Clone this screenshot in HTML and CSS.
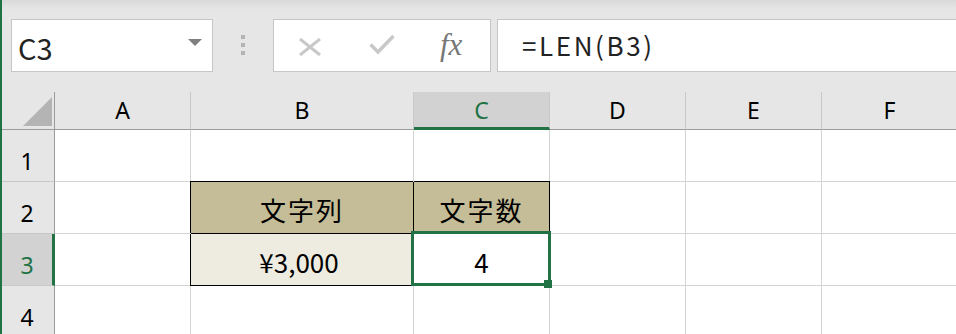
FILE: index.html
```html
<!DOCTYPE html>
<html lang="ja">
<head>
  <meta charset="UTF-8" />
  <meta name="viewport" content="width=device-width, initial-scale=1.0">
  <title>LEN</title>
  <link rel="stylesheet" href="styles.css">
</head>
<body>
  <div class="app">
    <div class="toolbar">
      <div class="namebox">
        <span class="ref">C3</span>
        <span class="caret"></span>
      </div>
      <div class="grip"><i></i><i></i><i></i></div>
      <div class="fbtns">
        <svg class="icon-x" width="24" height="18" viewBox="0 0 24 18">
          <path d="M2 1 L22 17 M22 1 L2 17" stroke="#c8c8c8" stroke-width="3" fill="none" />
        </svg>
        <svg class="icon-ok" width="26" height="21" viewBox="0 0 26 21">
          <path d="M1.5 10.5 L9 18 L24.5 2" stroke="#c8c8c8" stroke-width="3.5" fill="none" />
        </svg>
        <span class="fx">fx</span>
      </div>
      <div class="formula">=LEN(B3)</div>
    </div>

    <div class="sheet">
      <div class="corner"><span class="tri"></span></div>
      <div class="ch">A</div>
      <div class="ch">B</div>
      <div class="ch on">C</div>
      <div class="ch">D</div>
      <div class="ch">E</div>
      <div class="ch">F</div>

      <div class="rh">1</div>
      <div class="c"></div>
      <div class="c"></div>
      <div class="c"></div>
      <div class="c"></div>
      <div class="c"></div>
      <div class="c"></div>

      <div class="rh">2</div>
      <div class="c"></div>
      <div class="c head tl">文字列</div>
      <div class="c head t">文字数</div>
      <div class="c"></div>
      <div class="c"></div>
      <div class="c"></div>

      <div class="rh on">3</div>
      <div class="c"></div>
      <div class="c val l">¥3,000</div>
      <div class="c val2 active">4<span class="sel"><span class="handle"></span></span></div>
      <div class="c"></div>
      <div class="c"></div>
      <div class="c"></div>

      <div class="rh">4</div>
      <div class="c"></div>
      <div class="c"></div>
      <div class="c"></div>
      <div class="c"></div>
      <div class="c"></div>
      <div class="c"></div>
    </div>
  </div>
</body>
</html>
```

FILE: styles.css
```css
html, body {
  margin: 0;
  padding: 0;
  background: #e6e6e6;
  overflow: hidden;
}

.app {
  border-left: 2px solid #217346;
  height: 334px;
  overflow: hidden;
  font-family: "Noto Sans CJK JP", "Noto Sans", sans-serif;
  color: #000;
}

/* formula bar */
.toolbar {
  height: 92px;
  box-sizing: border-box;
  padding: 19px 0 0 9px;
  display: flex;
  align-items: flex-start;
  background: linear-gradient(#d9d9d9 0, #e4e4e4 8px, #e6e6e6 12px);
}

.namebox {
  width: 202px;
  height: 53px;
  box-sizing: border-box;
  background: #fff;
  border: 1px solid #c6c6c6;
  display: flex;
  align-items: center;
  padding: 0 10px 0 6px;
}

.ref {
  flex: 1;
  font-size: 29px;
  color: #222;
  line-height: 1;
  margin-top: 3px;
}

.caret {
  width: 0;
  height: 0;
  border-left: 7px solid transparent;
  border-right: 7px solid transparent;
  border-top: 7px solid #7f7f7f;
  margin-top: -6px;
}

.grip {
  width: 5px;
  margin: 16px 27px 0 28px;
  display: flex;
  flex-direction: column;
  gap: 4px;
}

.grip i {
  display: block;
  width: 4px;
  height: 4px;
  background: #b4b4b4;
}

.fbtns {
  width: 218px;
  height: 53px;
  box-sizing: border-box;
  background: #fff;
  border: 1px solid #c6c6c6;
  display: flex;
  align-items: center;
  padding-left: 24px;
}

.icon-x { margin-top: 2px; }
.icon-ok { margin-left: 47px; margin-top: -2px; }

.fx {
  margin-left: 45px;
  font-family: "Liberation Serif", serif;
  font-style: italic;
  font-size: 31px;
  color: #777;
  margin-top: -2px;
}

.formula {
  flex: 1;
  margin-left: 6px;
  height: 53px;
  box-sizing: border-box;
  background: #fff;
  border: 1px solid #c6c6c6;
  border-right: none;
  padding-left: 24px;
  font-size: 26px;
  line-height: 50px;
  letter-spacing: 2.6px;
  color: #222;
}

/* grid */
.sheet {
  display: grid;
  grid-template-columns: 53px 136px 223px 136px 136px 136px 136px;
  grid-template-rows: 38px 52px 52px 52px 52px;
  background: #fff;
}

.sheet > div {
  box-sizing: border-box;
}

.corner {
  background: #e6e6e6;
  border-right: 1px solid #9b9b9b;
  border-bottom: 1px solid #9b9b9b;
  display: flex;
  justify-content: flex-end;
  align-items: flex-end;
  padding: 0 2px 3px 0;
}

.tri {
  width: 0;
  height: 0;
  border-left: 29px solid transparent;
  border-bottom: 29px solid #b4b4b4;
}

.ch {
  background: #e6e6e6;
  border-right: 1px solid #c8c8c8;
  border-bottom: 1px solid #9b9b9b;
  font-family: "Noto Sans", sans-serif;
  font-size: 23px;
  line-height: 1;
  display: flex;
  justify-content: center;
  align-items: flex-end;
  padding-bottom: 7px;
}

.ch.on {
  background: #d2d2d2;
  color: #217346;
  border-bottom: 3px solid #217346;
  padding-bottom: 5px;
}

.rh {
  background: #e6e6e6;
  border-right: 1px solid #9b9b9b;
  border-bottom: 1px solid #c8c8c8;
  font-family: "Noto Sans", sans-serif;
  font-size: 23px;
  line-height: 1;
  display: flex;
  justify-content: center;
  align-items: flex-end;
  padding: 0 2px 8px 0;
}

.rh.on {
  background: #d2d2d2;
  color: #217346;
  border-right: 3px solid #217346;
  padding-right: 0;
}

.c {
  border-right: 1px solid #d4d4d4;
  border-bottom: 1px solid #d4d4d4;
  font-size: 26px;
  line-height: 1;
  display: flex;
  justify-content: center;
  align-items: flex-end;
  padding-bottom: 10px;
}

.head {
  background: #c4bd97;
  border-right-color: #000;
  border-bottom-color: #000;
  letter-spacing: 2px;
}

.val {
  background: #eeece1;
  border-right-color: #000;
  border-bottom-color: #000;
  padding-right: 6px;
}

.val2 {
  border-right-color: #000;
  border-bottom-color: #000;
}

.tl { box-shadow: -1px -1px 0 #000; }
.t { box-shadow: 0 -1px 0 #000; }
.l { box-shadow: -1px 0 0 #000; }

.active {
  position: relative;
}

.sel {
  position: absolute;
  top: -3px;
  left: -3px;
  right: -2px;
  bottom: -1px;
  border: 3px solid #217346;
}

.handle {
  position: absolute;
  width: 8px;
  height: 8px;
  right: -4px;
  bottom: -5px;
  background: #217346;
}
```
